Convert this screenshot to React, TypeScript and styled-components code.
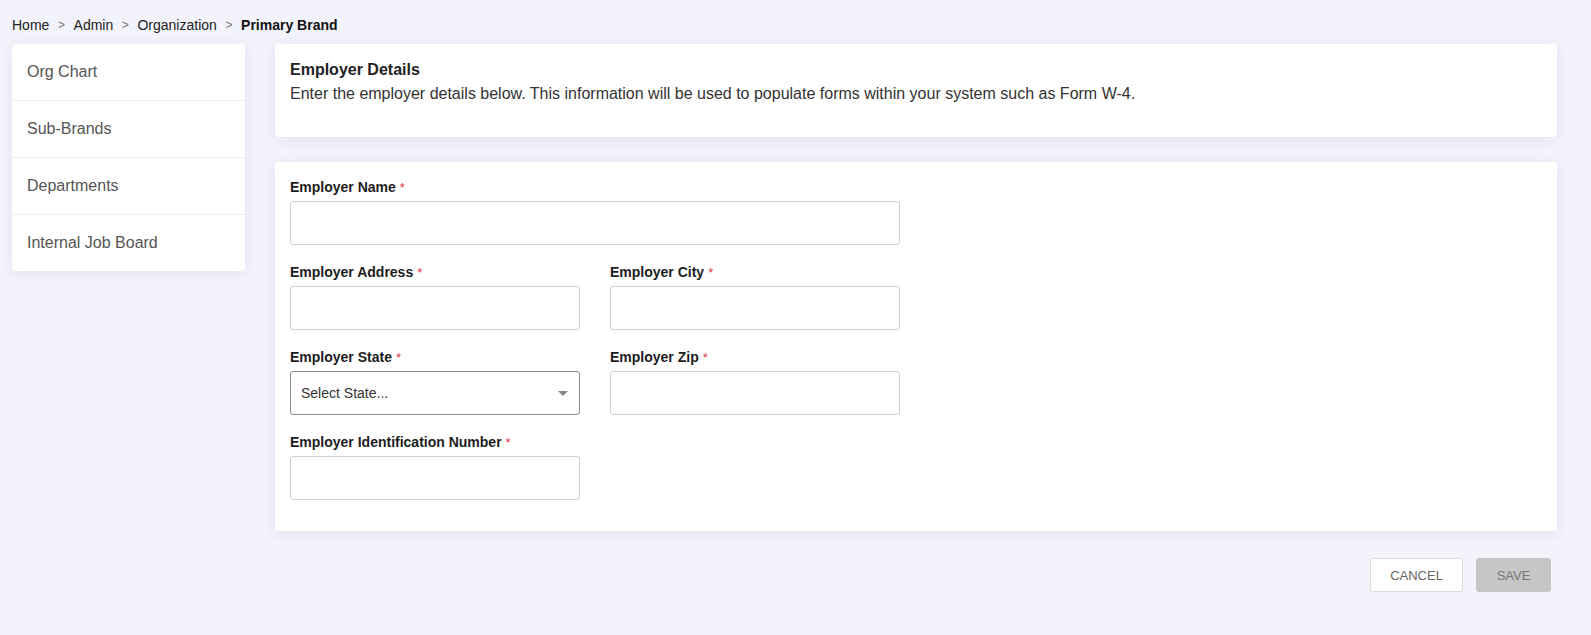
import React from "react";
import styled, { createGlobalStyle } from "styled-components";

const GlobalStyle = createGlobalStyle`
  html, body {
    margin: 0;
    padding: 0;
    background: #f2f3fb;
    font-family: "Liberation Sans", Arial, sans-serif;
    color: #222;
  }
`;

const Page = styled.div`
  padding: 0 34px 44px 12px;
`;

const Breadcrumb = styled.nav`
  display: flex;
  align-items: center;
  font-size: 14px;
  line-height: 17px;
  padding: 17px 0 10px;
  color: #222;
  .sep {
    color: #777;
    font-size: 12px;
    margin: 0 8.6px;
  }
  .current {
    font-weight: bold;
    color: #111;
  }
`;

const Layout = styled.div`
  display: grid;
  grid-template-columns: 233px 1fr;
  column-gap: 30px;
  align-items: start;
`;

const SideMenu = styled.ul`
  list-style: none;
  margin: 0;
  padding: 0;
  background: #fff;
  border-radius: 4px;
  box-shadow: 0 2px 14px rgba(40, 40, 90, 0.08);
`;

const MenuItem = styled.li`
  height: 56px;
  display: flex;
  align-items: center;
  padding-left: 15px;
  font-size: 16px;
  color: #555;
  border-bottom: 1px solid #ececec;
  &:last-child {
    border-bottom: none;
  }
`;

const Main = styled.div`
  display: flex;
  flex-direction: column;
`;

const Card = styled.section<{ $pad: string }>`
  background: #fff;
  border-radius: 4px;
  box-shadow: 0 3px 16px rgba(40, 40, 90, 0.08);
  padding: ${(p) => p.$pad};
  & + & {
    margin-top: 25px;
  }
`;

const CardTitle = styled.h2`
  margin: 0;
  font-size: 16px;
  line-height: 20px;
  font-weight: bold;
  color: #222;
`;

const CardText = styled.p`
  margin: 4px 0 0;
  font-size: 16px;
  line-height: 20px;
  color: #333;
`;

const FormGrid = styled.div`
  display: grid;
  grid-template-columns: 290px 290px;
  column-gap: 30px;
  row-gap: 19px;
`;

const Field = styled.div<{ $wide?: boolean }>`
  display: flex;
  flex-direction: column;
  grid-column: ${(p) => (p.$wide ? "1 / span 2" : "auto")};
`;

const Label = styled.label`
  display: block;
  height: 16px;
  font-size: 14px;
  line-height: 16px;
  font-weight: bold;
  color: #1d1d1d;
  margin-bottom: 6px;
  overflow: visible;
  .req {
    color: #e0384b;
    font-weight: normal;
    font-size: 13px;
    line-height: 0;
    margin-left: 4px;
  }
`;

const TextInput = styled.input`
  box-sizing: border-box;
  height: 44px;
  width: 100%;
  border: 1px solid #cfcfcf;
  border-radius: 3px;
  background: #fff;
  font-family: inherit;
  font-size: 14px;
  padding: 0 10px;
  outline: none;
`;

const SelectBox = styled.div`
  box-sizing: border-box;
  height: 44px;
  border: 1px solid #8c8c8c;
  border-radius: 3px;
  display: flex;
  align-items: center;
  justify-content: space-between;
  padding: 0 10px;
  font-size: 14px;
  color: #333;
  .arrow {
    width: 0;
    height: 0;
    border-left: 5px solid transparent;
    border-right: 5px solid transparent;
    border-top: 5px solid #8a8a8a;
    margin-right: 1px;
  }
`;

const Actions = styled.div`
  display: flex;
  justify-content: flex-end;
  gap: 13px;
  margin-top: 27px;
  padding-right: 6px;
`;

const Button = styled.button<{ $primary?: boolean }>`
  box-sizing: border-box;
  height: 34px;
  min-width: ${(p) => (p.$primary ? "75px" : "93px")};
  font-family: inherit;
  font-size: 13px;
  text-transform: uppercase;
  border-radius: ${(p) => (p.$primary ? "3px" : "2px")};
  border: 1px solid ${(p) => (p.$primary ? "#c6c6c6" : "#dcdcdc")};
  background: ${(p) => (p.$primary ? "#c6c6c6" : "#fff")};
  color: ${(p) => (p.$primary ? "#777" : "#666")};
  cursor: pointer;
`;

const menu = ["Org Chart", "Sub-Brands", "Departments", "Internal Job Board"];

const Req = () => <span className="req">*</span>;

export default function App() {
  return (
    <>
      <GlobalStyle />
      <Page>
        <Breadcrumb>
          <span>Home</span>
          <span className="sep">&gt;</span>
          <span>Admin</span>
          <span className="sep">&gt;</span>
          <span>Organization</span>
          <span className="sep">&gt;</span>
          <span className="current">Primary Brand</span>
        </Breadcrumb>
        <Layout>
          <SideMenu>
            {menu.map((m) => (
              <MenuItem key={m}>{m}</MenuItem>
            ))}
          </SideMenu>
          <Main>
            <Card $pad="16px 15px 33px">
              <CardTitle>Employer Details</CardTitle>
              <CardText>
                Enter the employer details below. This information will be used
                to populate forms within your system such as Form W-4.
              </CardText>
            </Card>
            <Card $pad="17px 15px 31px">
              <FormGrid>
                <Field $wide>
                  <Label>
                    Employer Name
                    <Req />
                  </Label>
                  <TextInput />
                </Field>
                <Field>
                  <Label>
                    Employer Address
                    <Req />
                  </Label>
                  <TextInput />
                </Field>
                <Field>
                  <Label>
                    Employer City
                    <Req />
                  </Label>
                  <TextInput />
                </Field>
                <Field>
                  <Label>
                    Employer State
                    <Req />
                  </Label>
                  <SelectBox>
                    <span>Select State...</span>
                    <span className="arrow" />
                  </SelectBox>
                </Field>
                <Field>
                  <Label>
                    Employer Zip
                    <Req />
                  </Label>
                  <TextInput />
                </Field>
                <Field>
                  <Label>
                    Employer Identification Number
                    <Req />
                  </Label>
                  <TextInput />
                </Field>
              </FormGrid>
            </Card>
            <Actions>
              <Button>Cancel</Button>
              <Button $primary>Save</Button>
            </Actions>
          </Main>
        </Layout>
      </Page>
    </>
  );
}
